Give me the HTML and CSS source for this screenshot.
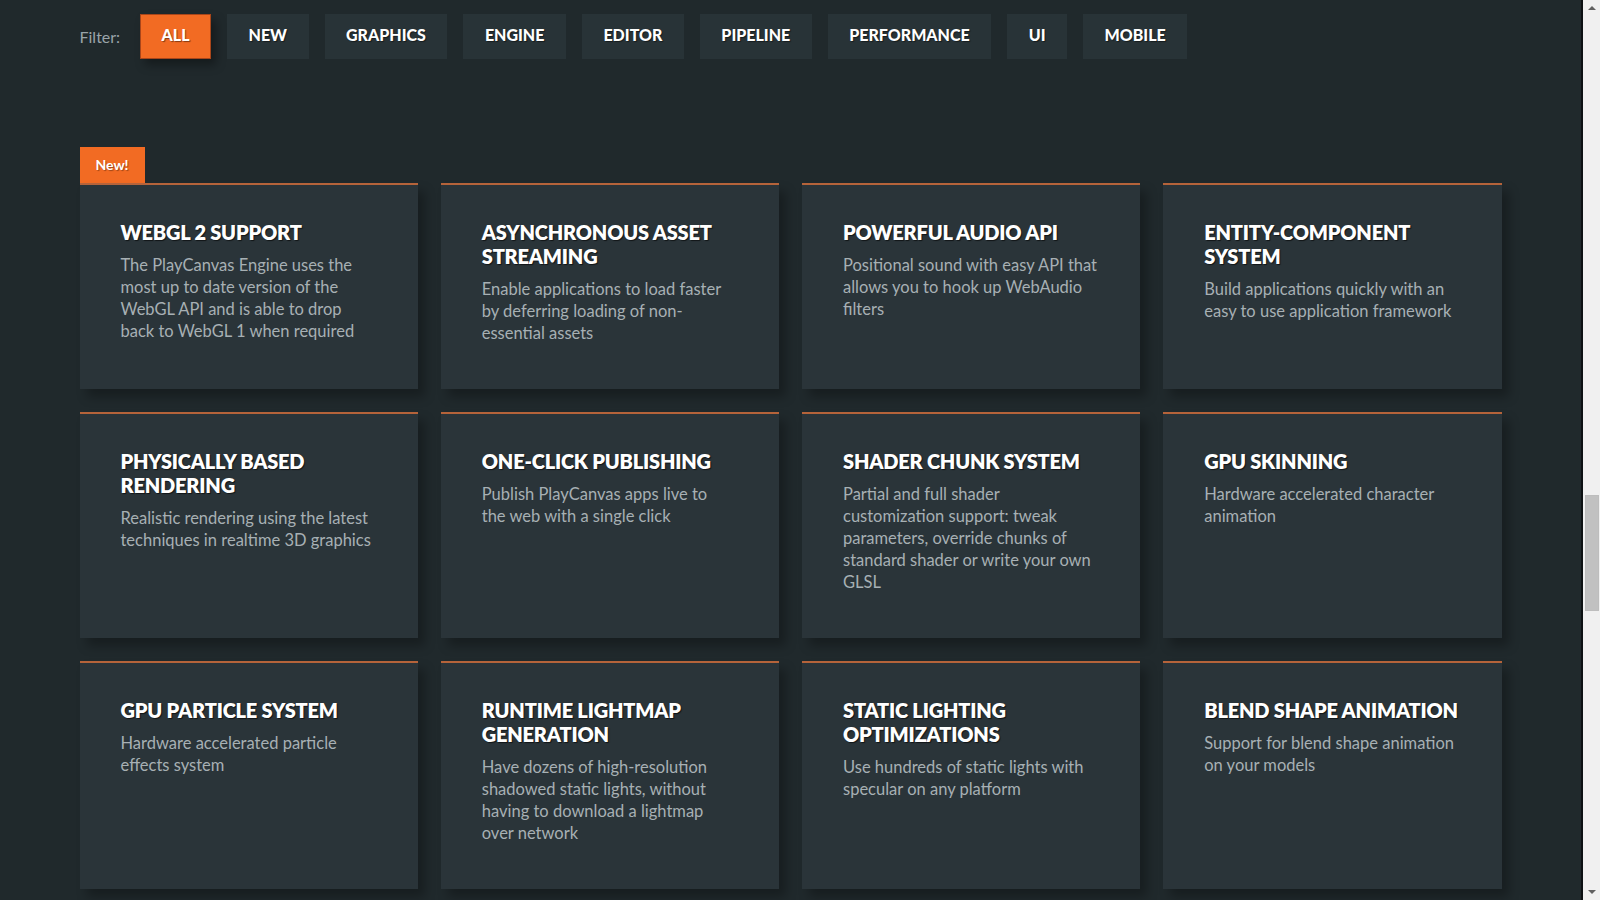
FILE: index.html
```html
<!DOCTYPE html>
<html lang="en">
<head>
<meta charset="utf-8">
<title>PlayCanvas Features</title>
<link rel="stylesheet" href="styles.css">
</head>
<body>
<div class="page">
  <main class="main">
    <div class="container">
      <nav class="filters">
        <span class="filter-label">Filter:</span>
        <button class="filter-btn active">All</button>
        <button class="filter-btn">New</button>
        <button class="filter-btn">Graphics</button>
        <button class="filter-btn">Engine</button>
        <button class="filter-btn">Editor</button>
        <button class="filter-btn">Pipeline</button>
        <button class="filter-btn">Performance</button>
        <button class="filter-btn">UI</button>
        <button class="filter-btn">Mobile</button>
      </nav>

      <div class="badge-row"><span class="badge">New!</span></div>

      <section class="grid">
        <article class="card">
          <h3 class="card-title">WebGL 2 Support</h3>
          <p class="card-text">The PlayCanvas Engine uses the most up to date version of the WebGL API and is able to drop back to WebGL 1 when required</p>
        </article>
        <article class="card">
          <h3 class="card-title">Asynchronous Asset Streaming</h3>
          <p class="card-text">Enable applications to load faster by deferring loading of non-essential assets</p>
        </article>
        <article class="card">
          <h3 class="card-title">Powerful Audio API</h3>
          <p class="card-text">Positional sound with easy API that allows you to hook up WebAudio filters</p>
        </article>
        <article class="card">
          <h3 class="card-title">Entity-Component System</h3>
          <p class="card-text">Build applications quickly with an easy to use application framework</p>
        </article>

        <article class="card">
          <h3 class="card-title">Physically Based Rendering</h3>
          <p class="card-text">Realistic rendering using the latest techniques in realtime 3D graphics</p>
        </article>
        <article class="card">
          <h3 class="card-title">One-Click Publishing</h3>
          <p class="card-text card-text-narrow">Publish PlayCanvas apps live to the web with a single click</p>
        </article>
        <article class="card">
          <h3 class="card-title">Shader Chunk System</h3>
          <p class="card-text">Partial and full shader customization support: tweak parameters, override chunks of standard shader or write your own GLSL</p>
        </article>
        <article class="card">
          <h3 class="card-title">GPU Skinning</h3>
          <p class="card-text">Hardware accelerated character animation</p>
        </article>

        <article class="card">
          <h3 class="card-title">GPU Particle System</h3>
          <p class="card-text">Hardware accelerated particle effects system</p>
        </article>
        <article class="card">
          <h3 class="card-title">Runtime Lightmap Generation</h3>
          <p class="card-text">Have dozens of high-resolution shadowed static lights, without having to download a lightmap over network</p>
        </article>
        <article class="card">
          <h3 class="card-title">Static Lighting Optimizations</h3>
          <p class="card-text">Use hundreds of static lights with specular on any platform</p>
        </article>
        <article class="card">
          <h3 class="card-title">Blend Shape Animation</h3>
          <p class="card-text">Support for blend shape animation on your models</p>
        </article>
      </section>
    </div>
  </main>
  <aside class="scrollbar" aria-hidden="true">
    <span class="arrow arrow-up"></span>
    <div class="track">
      <div class="thumb"></div>
    </div>
    <span class="arrow arrow-down"></span>
  </aside>
</div>
</body>
</html>
```

FILE: styles.css
```css
* {
  box-sizing: border-box;
}

html, body {
  margin: 0;
  padding: 0;
  height: 100%;
}

body {
  font-family: Lato, "Open Sans", "Liberation Sans", sans-serif;
  background: #20292c;
  color: #fff;
  overflow: hidden;
}

.page {
  display: flex;
  height: 100vh;
}

.main {
  flex: 1;
  background: #20292c;
  border-right: 2px solid #0d1113;
  overflow: hidden;
}

.container {
  width: 1422px;
  margin: 0 auto;
  padding-top: 14px;
}

/* Filters */
.filters {
  display: flex;
  align-items: center;
  gap: 16px;
  height: 45px;
}

.filter-label {
  font-size: 16px;
  color: #9aa4a9;
  margin-right: 4px;
}

.filter-btn {
  height: 45px;
  padding: 0 20.5px 4px;
  border: 1px solid transparent;
  background: #283337;
  color: #fff;
  font-family: Lato, "Open Sans", "Liberation Sans", sans-serif;
  font-weight: 900;
  font-size: 16px;
  text-transform: uppercase;
  letter-spacing: 0;
  text-shadow: 1px 1px 1px rgba(0, 0, 0, 0.45);
  cursor: pointer;
}

.filter-btn.active {
  background: #f26b23;
  border-color: #a9461a;
  box-shadow: 5px 6px 9px rgba(0, 0, 0, 0.35);
}

/* Badge */
.badge-row {
  margin-top: 88px;
  display: flex;
}

.badge {
  display: flex;
  align-items: center;
  justify-content: center;
  width: 65px;
  height: 36px;
  padding-bottom: 2px;
  background: #f26b23;
  color: #fff;
  font-weight: 700;
  font-size: 14px;
  text-shadow: 1px 1px 1px rgba(0, 0, 0, 0.35);
}

/* Grid */
.grid {
  display: grid;
  grid-template-columns: repeat(4, 1fr);
  gap: 23px;
}

.card {
  background: #2a3439;
  border-top: 2px solid #b5633a;
  padding: 35px 41px 45px;
  box-shadow: 7px 8px 10px rgba(0, 0, 0, 0.28);
}

.card-title {
  margin: 0 0 10px;
  font-size: 20px;
  line-height: 24px;
  font-weight: 800;
  text-transform: uppercase;
  letter-spacing: -0.2px;
  color: #fff;
  text-shadow: 1px 1px 1px rgba(0, 0, 0, 0.6);
}

.card-text {
  margin: 0;
  font-size: 16.5px;
  line-height: 22px;
  color: #a7b0b4;
}

.card-text-narrow {
  max-width: 248px;
}

/* Fake scrollbar */
.scrollbar {
  width: 17px;
  flex: none;
  background: #f0f0f0;
  display: flex;
  flex-direction: column;
  align-items: center;
}

.track {
  flex: 1;
  width: 100%;
  padding-top: 480px;
}

.thumb {
  margin: 0 auto;
  width: 14px;
  height: 116px;
  background: #c1c1c1;
  border: 1px solid #bdbdbd;
}

.arrow {
  display: block;
  width: 0;
  height: 0;
  border-left: 4px solid transparent;
  border-right: 4px solid transparent;
}

.arrow-up {
  margin: 6px 0 5px;
  border-bottom: 4px solid #606060;
}

.arrow-down {
  margin: 5px 0 6px;
  border-top: 4px solid #606060;
}
```
